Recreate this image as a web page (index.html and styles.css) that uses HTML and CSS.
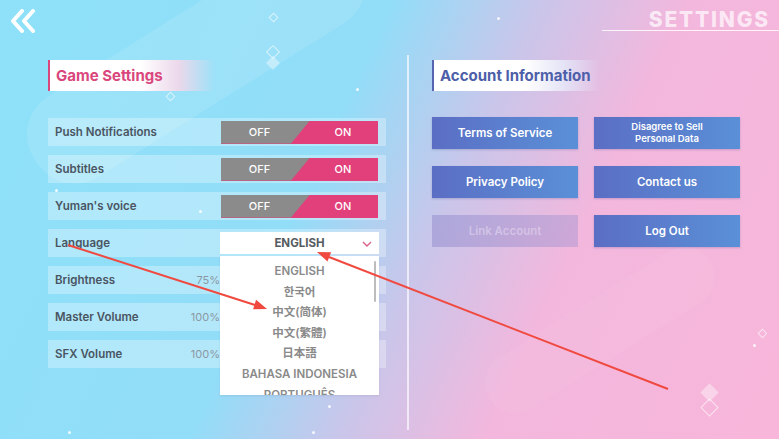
FILE: index.html
```html
<!DOCTYPE html>
<html lang="en">
<head>
    <meta charset="UTF-8">
    <meta name="viewport" content="width=device-width, initial-scale=1.0">
    <title>Settings</title>
    <link rel="stylesheet" href="styles.css">
</head>
<body>
    <div class="screen">
        <div class="glow glow-a"></div>
        <div class="glow glow-b"></div>

        <header class="topbar">
            <button class="back-btn" aria-label="Back">
                <svg width="28" height="24" viewBox="0 0 28 24">
                    <polyline points="13,2 4,12 13,22" />
                    <polyline points="24,2 15,12 24,22" />
                </svg>
            </button>
            <div class="page-title">
                <h1>SETTINGS</h1>
            </div>
        </header>

        <main class="panels">
            <section class="panel game-panel">
                <h2 class="section-title pink">Game Settings</h2>
                <ul class="settings">
                    <li class="row">
                        <span class="label">Push Notifications</span>
                        <div class="toggle"><span class="off">OFF</span><span class="on">ON</span></div>
                    </li>
                    <li class="row">
                        <span class="label">Subtitles</span>
                        <div class="toggle"><span class="off">OFF</span><span class="on">ON</span></div>
                    </li>
                    <li class="row">
                        <span class="label">Yuman's voice</span>
                        <div class="toggle"><span class="off">OFF</span><span class="on">ON</span></div>
                    </li>
                    <li class="row lang-row">
                        <span class="label">Language</span>
                        <div class="select">
                            <span class="current">ENGLISH</span>
                            <svg class="chevron" width="10" height="6" viewBox="0 0 10 6">
                                <polyline points="1,1 5,5 9,1" />
                            </svg>
                            <div class="options">
                                <ul>
                                    <li>ENGLISH</li>
                                    <li lang="ko">한국어</li>
                                    <li lang="zh-CN">中文(简体)</li>
                                    <li lang="zh-TW">中文(繁體)</li>
                                    <li lang="ja">日本語</li>
                                    <li>BAHASA INDONESIA</li>
                                    <li>PORTUGUÊS</li>
                                </ul>
                                <div class="scrollbar"></div>
                            </div>
                        </div>
                    </li>
                    <li class="row">
                        <span class="label">Brightness</span>
                        <span class="value">75%</span>
                        <div class="slider"><div class="fill" style="width: 75%"></div></div>
                    </li>
                    <li class="row">
                        <span class="label">Master Volume</span>
                        <span class="value">100%</span>
                        <div class="slider"><div class="fill" style="width: 100%"></div></div>
                    </li>
                    <li class="row">
                        <span class="label">SFX Volume</span>
                        <span class="value">100%</span>
                        <div class="slider"><div class="fill" style="width: 100%"></div></div>
                    </li>
                </ul>
            </section>

            <div class="divider"></div>

            <section class="panel account-panel">
                <h2 class="section-title blue">Account Information</h2>
                <div class="btn-grid">
                    <button class="btn">Terms of Service</button>
                    <button class="btn small">Disagree to Sell<br>Personal Data</button>
                    <button class="btn">Privacy Policy</button>
                    <button class="btn">Contact us</button>
                    <button class="btn" disabled>Link Account</button>
                    <button class="btn">Log Out</button>
                </div>
            </section>
        </main>

        <!-- sparkles -->
        <span class="gem outline" style="left: 270px; top: 14px;"></span>
        <span class="gem outline big" style="left: 268px; top: 47px;"></span>
        <span class="gem solid big" style="left: 268px; top: 58px;"></span>
        <span class="gem outline" style="left: 167px; top: 93px;"></span>
        <span class="gem outline" style="left: 759px; top: 330px;"></span>
        <span class="gem solid large" style="left: 703px; top: 386px;"></span>
        <span class="gem outline large" style="left: 703px; top: 401px;"></span>
        <span class="dot" style="left: 356px; top: 88px;"></span>
        <span class="dot" style="left: 497px; top: 17px;"></span>
        <span class="dot" style="left: 753px; top: 344px;"></span>
        <span class="dot" style="left: 68px; top: 431px;"></span>
        <span class="dot" style="left: 312px; top: 431px;"></span>
        <span class="dot" style="left: 328px; top: 405px;"></span>
        <span class="dot" style="left: 55px; top: 189px;"></span>
        <span class="dot" style="left: 199px; top: 210px;"></span>

        <svg class="marks" width="779" height="439" viewBox="0 0 779 439">
            <line x1="68" y1="245" x2="255" y2="305" />
            <polygon points="267,309 253.1,309.3 256.1,299.8" />
            <line x1="668" y1="389" x2="329" y2="257" />
            <polygon points="317,252 331.1,252.3 327.5,261.6" />
        </svg>
    </div>
</body>
</html>
```

FILE: styles.css
```css
* {
    box-sizing: border-box;
}

body {
    margin: 0;
    font-family: Inter, "Noto Sans CJK SC", sans-serif;
    color: #4a5562;
}

ul {
    list-style: none;
    margin: 0;
    padding: 0;
}

.screen {
    position: relative;
    width: 779px;
    height: 439px;
    overflow: hidden;
    background: linear-gradient(115deg, #8ee1f9 0%, #92ddf8 40%, #c9c6ea 55%, #f3b7dd 70%, #f8b6da 100%);
}

/* soft light bands behind everything */
.glow {
    position: absolute;
    background: rgba(255, 255, 255, 0.1);
    border-radius: 45px;
    pointer-events: none;
}

.glow-a {
    width: 380px;
    height: 95px;
    left: 10px;
    top: 120px;
    transform: rotate(-32deg);
    transform-origin: left top;
}

.glow-b {
    width: 260px;
    height: 60px;
    left: 470px;
    top: 300px;
    transform: rotate(-32deg);
    background: rgba(255, 255, 255, 0.05);
}

/* top bar */
.topbar {
    position: relative;
    display: flex;
    justify-content: space-between;
    align-items: flex-start;
    height: 55px;
}

.back-btn {
    margin: 9px 0 0 9px;
    padding: 0;
    border: none;
    background: none;
    cursor: pointer;
}

.back-btn svg polyline {
    fill: none;
    stroke: #fff;
    stroke-width: 4;
    stroke-linecap: round;
    stroke-linejoin: round;
}

.page-title {
    width: 177px;
    padding-top: 10px;
    padding-right: 9px;
    text-align: right;
    border-bottom: 1px solid rgba(255, 255, 255, 0.85);
}

.page-title h1 {
    margin: 0;
    font-size: 21px;
    line-height: 20px;
    font-weight: 800;
    letter-spacing: 1.8px;
    color: rgba(255, 255, 255, 0.7);
}

/* main panels */
.panels {
    position: relative;
    display: flex;
    height: 384px;
    padding-left: 48px;
}

.panel {
    padding-top: 5px;
}

.game-panel {
    width: 338px;
}

.section-title {
    height: 31px;
    margin: 0;
    padding-left: 6px;
    font-size: 15px;
    font-weight: 700;
    line-height: 31px;
}

.section-title.pink {
    width: 167px;
    margin-bottom: 27px;
    color: #d9477d;
    border-left: 2px solid #d9477d;
    background: linear-gradient(90deg, #fff 0%, #fff 55%, rgba(250, 214, 232, 0.85) 78%, rgba(255, 255, 255, 0) 100%);
}

.section-title.blue {
    width: 168px;
    margin-bottom: 26px;
    color: #4d5fa9;
    border-left: 2px solid #5565b0;
    background: linear-gradient(90deg, #fff 0%, #fff 55%, rgba(232, 236, 250, 0.8) 78%, rgba(255, 255, 255, 0) 100%);
}

.settings {
    display: flex;
    flex-direction: column;
    gap: 9px;
}

.row {
    position: relative;
    display: flex;
    align-items: center;
    height: 28px;
    padding-left: 7px;
    background: rgba(255, 255, 255, 0.3);
}

.label {
    flex: 1;
    font-size: 11.5px;
    font-weight: 600;
    color: #4a5562;
}

.toggle {
    position: relative;
    display: grid;
    grid-template-columns: 77px 1fr;
    width: 157px;
    height: 23px;
    margin-right: 8px;
    background: #e1407a;
}

.toggle::before {
    content: "";
    position: absolute;
    inset: 0;
    background: #8b8b8b;
    clip-path: polygon(0 0, 89px 0, 70px 100%, 0 100%);
}

.toggle span {
    position: relative;
    font-size: 11px;
    font-weight: 500;
    line-height: 23px;
    color: #fff;
    text-align: center;
}

.toggle .on {
    padding-left: 10px;
}

.value {
    font-size: 11px;
    color: #8c98a3;
}

.slider {
    position: relative;
    width: 152px;
    height: 6px;
    margin: 0 8px 0 6px;
    border-radius: 3px;
    background: rgba(255, 255, 255, 0.6);
}

.slider .fill {
    height: 100%;
    border-radius: 3px;
    background: #e1407a;
}

/* language picker */
.lang-row {
    z-index: 2;
}

.select {
    position: relative;
    display: flex;
    justify-content: center;
    align-items: center;
    width: 159px;
    height: 22px;
    margin-right: 7px;
    background: #fff;
}

.select .current {
    font-size: 11.5px;
    font-weight: 700;
    color: #555b60;
}

.chevron {
    position: absolute;
    right: 7px;
    top: 9px;
}

.chevron polyline {
    fill: none;
    stroke: #d9608a;
    stroke-width: 1.4;
}

.options {
    position: absolute;
    top: 24px;
    left: 0;
    width: 159px;
    height: 139px;
    overflow: hidden;
    background: #fff;
    box-shadow: 0 1px 2px rgba(0, 0, 0, 0.08);
}

.options ul {
    padding-top: 5px;
}

.options li {
    height: 20.6px;
    font-size: 11.5px;
    font-weight: 600;
    line-height: 20.6px;
    text-align: center;
    color: #8a8a8a;
}

.scrollbar {
    position: absolute;
    top: 5px;
    right: 3px;
    width: 2.5px;
    height: 41px;
    border-radius: 2px;
    background: #bdbdbd;
}

.divider {
    width: 2px;
    height: 375px;
    margin-left: 21px;
    background: rgba(255, 255, 255, 0.65);
}

/* account */
.account-panel {
    margin-left: 23px;
}

.btn-grid {
    display: grid;
    grid-template-columns: 146px 146px;
    grid-auto-rows: 32px;
    column-gap: 16px;
    row-gap: 17px;
}

.btn {
    padding: 0;
    border: none;
    font-family: Inter, sans-serif;
    font-size: 11.5px;
    font-weight: 600;
    color: #fff;
    background: linear-gradient(90deg, #5b6ec4 0%, #5a90d7 100%);
    box-shadow: 0 1px 2px rgba(60, 70, 140, 0.25);
    cursor: pointer;
}

.btn.small {
    font-size: 9.5px;
    line-height: 12px;
}

.btn:disabled {
    color: rgba(230, 220, 240, 0.55);
    background: linear-gradient(90deg, rgba(120, 110, 190, 0.35) 0%, rgba(120, 130, 200, 0.3) 100%);
    box-shadow: none;
    cursor: default;
}

/* sparkles */
.gem {
    position: absolute;
    width: 7px;
    height: 7px;
    transform: rotate(45deg);
    pointer-events: none;
}

.gem.big {
    width: 10px;
    height: 10px;
}

.gem.large {
    width: 13px;
    height: 13px;
}

.gem.outline {
    border: 1px solid rgba(255, 255, 255, 0.6);
}

.gem.solid {
    background: rgba(255, 255, 255, 0.4);
}

.dot {
    position: absolute;
    width: 3px;
    height: 3px;
    border-radius: 50%;
    background: rgba(255, 255, 255, 0.85);
}

/* red annotation arrows */
.marks {
    position: absolute;
    left: 0;
    top: 0;
    pointer-events: none;
    z-index: 5;
}

.marks line {
    stroke: #f04a40;
    stroke-width: 2;
}

.marks polygon {
    fill: #f04a40;
}
```
